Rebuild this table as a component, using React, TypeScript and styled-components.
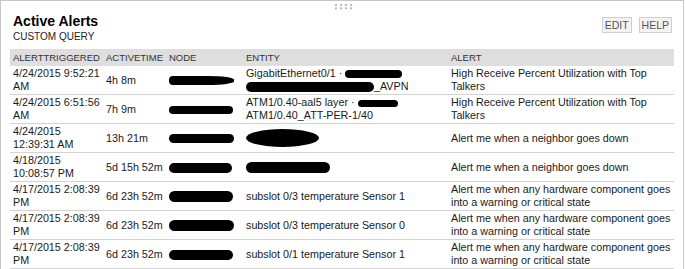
import React from "react";
import styled, { createGlobalStyle } from "styled-components";

const Global = createGlobalStyle`
  html, body { margin: 0; padding: 0; background: #fff; }
  body { font-family: "Liberation Sans", Arial, sans-serif; color: #1a1a1a; }
`;

const Panel = styled.section`
  position: relative;
  box-sizing: border-box;
  width: 684px;
  min-height: 269px;
  border: 1px solid #c6c6c6;
  border-bottom: none;
  background: #fff;
  padding: 0 9px;
`;

const Grip = styled.svg`
  position: absolute;
  top: 2px;
  left: 333px;
`;

const TitleBar = styled.header`
  display: flex;
  justify-content: space-between;
  align-items: flex-start;
  padding: 12px 2px 0 3px;
`;

const Title = styled.h1`
  margin: 0;
  font-size: 14px;
  line-height: 17px;
  font-weight: bold;
  color: #000;
`;

const Subtitle = styled.div`
  margin-top: 1px;
  font-size: 10px;
  line-height: 12px;
  color: #222;
`;

const Buttons = styled.div`
  display: flex;
  gap: 7px;
  margin-top: 4px;
`;

const Btn = styled.button`
  box-sizing: border-box;
  height: 16px;
  padding: 0 2px;
  border: 1px solid #cfcfcf;
  background: #f3f3f3;
  color: #555;
  font-family: "Liberation Sans", Arial, sans-serif;
  font-size: 10.5px;
  line-height: 13px;
`;

const Table = styled.table`
  margin-top: 6px;
  width: 664px;
  border-collapse: collapse;
  table-layout: fixed;
`;

const Th = styled.th`
  background: #dedede;
  height: 17px;
  padding: 0 3px;
  font-size: 9.5px;
  font-weight: normal;
  text-align: left;
  color: #333;
  vertical-align: middle;
  white-space: nowrap;
`;

const Td = styled.td<{ $pr?: number }>`
  padding: 1px ${(p) => (p.$pr ?? 3)}px 1px 3px;
  font-size: 10.75px;
  line-height: 13px;
  color: #1a1a1a;
  border-bottom: 1px solid #d3d3d3;
  vertical-align: middle;
  height: 26px;
`;

const Redact = styled.span<{ $w: number; $h: number; $r?: string }>`
  display: inline-block;
  vertical-align: middle;
  width: ${(p) => p.$w}px;
  height: ${(p) => p.$h}px;
  background: #000;
  border-radius: ${(p) => p.$r ?? "999px"};
`;

type Row = {
  when: string;
  active: string;
  node: React.ReactNode;
  entity: React.ReactNode;
  alert: string;
};

const HW = "Alert me when any hardware component goes into a warning or critical state";
const NB = "Alert me when a neighbor goes down";
const HR = "High Receive Percent Utilization with Top Talkers";

const rows: Row[] = [
  {
    when: "4/24/2015 9:52:21 AM",
    active: "4h 8m",
    node: <Redact $w={65} $h={9} $r="4px 40% 40% 4px" />,
    entity: (
      <>
        GigabitEthernet0/1 · <Redact $w={57} $h={8} /> <Redact $w={128} $h={10} />_AVPN
      </>
    ),
    alert: HR,
  },
  {
    when: "4/24/2015 6:51:56 AM",
    active: "7h 9m",
    node: <Redact $w={64} $h={8} />,
    entity: (
      <>
        ATM1/0.40-aal5 layer · <Redact $w={40} $h={7} /> ATM1/0.40_ATT-PER-1/40
      </>
    ),
    alert: HR,
  },
  {
    when: "4/24/2015 12:39:31 AM",
    active: "13h 21m",
    node: <Redact $w={65} $h={9} />,
    entity: <Redact $w={73} $h={18} $r="50%" />,
    alert: NB,
  },
  {
    when: "4/18/2015 10:08:57 PM",
    active: "5d 15h 52m",
    node: <Redact $w={63} $h={10} />,
    entity: <Redact $w={84} $h={11} />,
    alert: NB,
  },
  {
    when: "4/17/2015 2:08:39 PM",
    active: "6d 23h 52m",
    node: <Redact $w={64} $h={11} />,
    entity: "subslot 0/3 temperature Sensor 1",
    alert: HW,
  },
  {
    when: "4/17/2015 2:08:39 PM",
    active: "6d 23h 52m",
    node: <Redact $w={65} $h={11} />,
    entity: "subslot 0/3 temperature Sensor 0",
    alert: HW,
  },
  {
    when: "4/17/2015 2:08:39 PM",
    active: "6d 23h 52m",
    node: <Redact $w={64} $h={10} $r="5px" />,
    entity: "subslot 0/1 temperature Sensor 1",
    alert: HW,
  },
];

export default function App() {
  return (
    <>
      <Global />
      <Panel>
        <Grip width="20" height="8" viewBox="0 0 20 8">
          {[0, 1].map((r) =>
            [0, 1, 2, 3].map((c) => (
              <rect key={`${r}-${c}`} x={1 + c * 5} y={1 + r * 3.4} width="2" height="1.8" fill="#b4b4b4" />
            ))
          )}
        </Grip>
        <TitleBar>
          <div>
            <Title>Active Alerts</Title>
            <Subtitle>CUSTOM QUERY</Subtitle>
          </div>
          <Buttons>
            <Btn>EDIT</Btn>
            <Btn>HELP</Btn>
          </Buttons>
        </TitleBar>
        <Table>
          <colgroup>
            <col style={{ width: 93 }} />
            <col style={{ width: 63 }} />
            <col style={{ width: 77 }} />
            <col style={{ width: 205 }} />
            <col style={{ width: 226 }} />
          </colgroup>
          <thead>
            <tr>
              <Th>ALERTTRIGGERED</Th>
              <Th>ACTIVETIME</Th>
              <Th>NODE</Th>
              <Th>ENTITY</Th>
              <Th>ALERT</Th>
            </tr>
          </thead>
          <tbody>
            {rows.map((r, i) => (
              <tr key={i}>
                <Td $pr={1}>{r.when}</Td>
                <Td>{r.active}</Td>
                <Td>{r.node}</Td>
                <Td>{r.entity}</Td>
                <Td $pr={0}>{r.alert}</Td>
              </tr>
            ))}
          </tbody>
        </Table>
      </Panel>
    </>
  );
}
